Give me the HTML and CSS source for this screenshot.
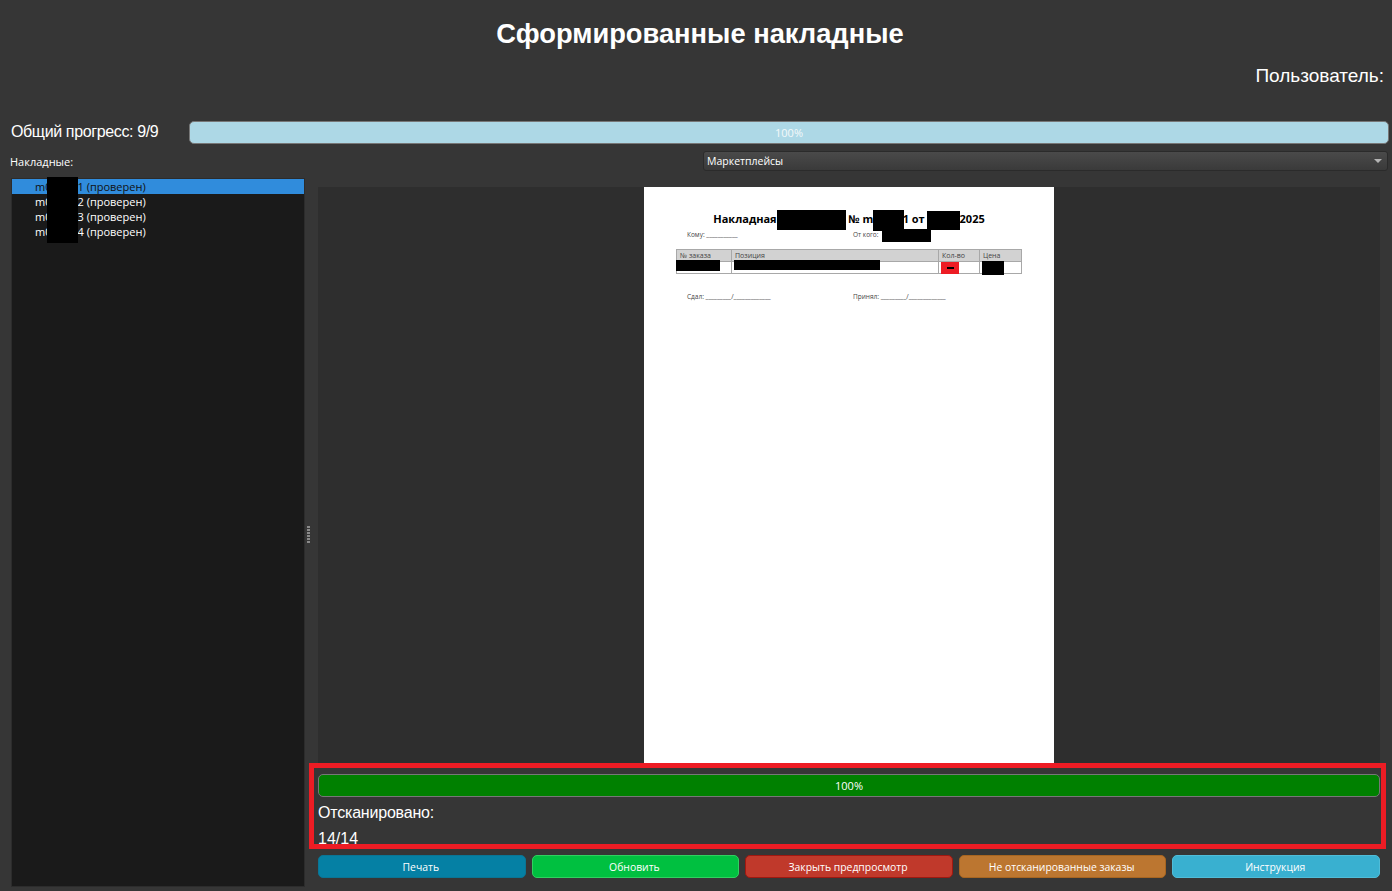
FILE: index.html
```html
<!DOCTYPE html>
<html lang="ru">
<head>
    <meta charset="UTF-8">
    <meta name="viewport" content="width=device-width, initial-scale=1.0">
    <title>Сформированные накладные</title>
    <link rel="stylesheet" href="styles.css">
</head>
<body>
    <div class="window">
        <h1 class="title">Сформированные накладные</h1>
        <div class="user">Пользователь:</div>

        <div class="total-row">
            <div class="total-label">Общий прогресс: 9/9</div>
            <div class="progress progress-blue">100%</div>
        </div>

        <div class="filter-row">
            <div class="small-label">Накладные:</div>
            <div class="combo">
                <span>Маркетплейсы</span>
                <span class="combo-arrow"></span>
            </div>
        </div>

        <div class="main">
            <div class="list">
                <div class="list-item selected">m0<span class="gap"></span>1 (проверен)</div>
                <div class="list-item">m0<span class="gap"></span>2 (проверен)</div>
                <div class="list-item">m0<span class="gap"></span>3 (проверен)</div>
                <div class="list-item">m0<span class="gap"></span>4 (проверен)</div>
                <div class="list-mask"></div>
            </div>

            <div class="splitter">
                <i></i><i></i><i></i><i></i><i></i><i></i>
            </div>

            <div class="content">
                <div class="preview">
                    <div class="sheet">
                        <div class="doc-title">Накладная <span class="mask mask-a"></span> № m0<span class="mask mask-b"></span>1 от <span class="mask mask-c"></span>2025</div>
                        <div class="doc-parties">
                            <div class="doc-col">Кому: ___________</div>
                            <div class="doc-col">От кого: <span class="mask mask-d"></span></div>
                        </div>
                        <div class="doc-table">
                            <div class="cell head">№ заказа</div>
                            <div class="cell head">Позиция</div>
                            <div class="cell head">Кол-во</div>
                            <div class="cell head">Цена</div>
                            <div class="cell"><span class="mask mask-e"></span></div>
                            <div class="cell"><span class="mask mask-f"></span></div>
                            <div class="cell"><span class="qty"><b></b></span></div>
                            <div class="cell"><span class="mask mask-g"></span></div>
                        </div>
                        <div class="doc-parties doc-sign">
                            <div class="doc-col">Сдал: _________/_____________</div>
                            <div class="doc-col">Принял: _________/_____________</div>
                        </div>
                    </div>
                </div>

                <div class="progress progress-green">100%</div>
                <div class="scan-label">Отсканировано:</div>
                <div class="scan-count">14/14</div>
                <div class="highlight"></div>

                <div class="buttons">
                    <button class="btn btn-print">Печать</button>
                    <button class="btn btn-refresh">Обновить</button>
                    <button class="btn btn-close">Закрыть предпросмотр</button>
                    <button class="btn btn-missing">Не отсканированные заказы</button>
                    <button class="btn btn-help">Инструкция</button>
                </div>
            </div>
        </div>
    </div>
</body>
</html>
```

FILE: styles.css
```css
html, body {
    margin: 0;
    height: 100%;
    background-color: #363636;
    overflow: hidden;
}
.window {
    height: 891px;
    display: flex;
    flex-direction: column;
    font-family: "Liberation Sans", Arial, sans-serif;
    color: #fff;
}
.title {
    margin: 0;
    height: 66px;
    padding: 1px 0 0 8px;
    box-sizing: border-box;
    line-height: 66px;
    font-size: 27.3px;
    font-weight: bold;
    text-align: center;
}
.user {
    height: 20px;
    line-height: 20px;
    padding-right: 8px;
    font-size: 19px;
    text-align: right;
}
.total-row {
    display: flex;
    align-items: center;
    margin-top: 35px;
    padding: 0 3px 0 11px;
}
.total-label {
    width: 178px;
    padding-bottom: 2px;
    font-size: 16px;
    letter-spacing: -0.37px;
}
.progress {
    flex: 1;
    box-sizing: border-box;
    height: 23px;
    line-height: 21px;
    border: 1px solid #777;
    border-radius: 5px;
    font-family: "Open Sans", sans-serif;
    font-size: 11px;
    text-align: center;
}
.progress-blue {
    background-color: #add8e6;
    color: #f4f8fa;
}
.progress-green {
    flex: none;
    height: 23px;
    margin-top: 11px;
    background-color: #008000;
}
.filter-row {
    display: flex;
    align-items: center;
    height: 20px;
    margin-top: 7px;
    padding: 0 4px 0 10px;
}
.small-label {
    width: 693px;
    font-family: "Open Sans", sans-serif;
    font-size: 11px;
}
.combo {
    flex: 1;
    box-sizing: border-box;
    height: 20px;
    display: flex;
    align-items: center;
    justify-content: space-between;
    padding: 0 5px 0 3px;
    background: linear-gradient(#4a4a4a, #3a3a3a);
    border: 1px solid #2b2b2b;
    border-radius: 3px;
    font-family: "Open Sans", sans-serif;
    font-size: 10.5px;
}
.combo-arrow {
    width: 0;
    height: 0;
    border-left: 4px solid transparent;
    border-right: 4px solid transparent;
    border-top: 4px solid #b5b5b5;
}
.main {
    flex: 1;
    display: flex;
    margin: 7px 12px 4px 11px;
    min-height: 0;
}
.list {
    position: relative;
    box-sizing: border-box;
    width: 294px;
    background-color: #1a1a1a;
    border: 1px solid #2c2c2c;
    font-family: "Open Sans", sans-serif;
    font-size: 11px;
}
.list-item {
    height: 15px;
    line-height: 15px;
    padding-left: 23px;
    color: #fff;
    white-space: nowrap;
}
.list-item.selected {
    background-color: #308cdc;
    color: #111;
}
.gap {
    display: inline-block;
    width: 26px;
}
.list-mask {
    position: absolute;
    left: 35px;
    top: -2px;
    width: 31px;
    height: 66px;
    background-color: #000;
}
.splitter {
    box-sizing: border-box;
    width: 13px;
    display: flex;
    flex-direction: column;
    align-items: flex-start;
    justify-content: center;
    gap: 1px;
    padding: 3px 0 0 2px;
}
.splitter i {
    width: 3px;
    height: 2px;
    background-color: #8a8a8a;
}
.content {
    position: relative;
    flex: 1;
    display: flex;
    flex-direction: column;
    padding-top: 9px;
}
.preview {
    height: 576px;
    display: flex;
    justify-content: center;
    background-color: #2e2e2e;
    overflow: hidden;
}
.sheet {
    box-sizing: border-box;
    width: 410px;
    padding: 0 32px;
    background-color: #fff;
    color: #444;
    font-family: "Open Sans", sans-serif;
    font-size: 6.5px;
}
.doc-title {
    height: 20px;
    margin-top: 22px;
    line-height: 20px;
    color: #000;
    font-size: 11px;
    font-weight: bold;
    text-align: center;
    white-space: nowrap;
}
.mask {
    display: inline-block;
    background-color: #000;
    vertical-align: middle;
}
.mask-a { width: 69px; height: 20px; margin-left: -3px; }
.mask-b { width: 31px; height: 21px; margin: 0 -1px 0 -7px; }
.mask-c { width: 33px; height: 19px; margin-left: -1px; }
.mask-d { width: 49px; height: 13px; margin-left: 2px; }
.mask-e { width: 44px; height: 11px; margin: -2px 0 0 -4px; display: block; }
.mask-f { width: 146px; height: 10px; margin: -2px 0 0 -1px; display: block; }
.mask-g { width: 22px; height: 14px; margin: -1px 0 0 -1px; display: block; }
.doc-parties {
    display: flex;
    height: 14px;
    margin-top: -1px;
    padding-left: 11px;
    line-height: 14px;
}
.doc-col {
    width: 166px;
    white-space: nowrap;
}
.doc-table {
    display: grid;
    grid-template-columns: 54px 207px 41px 42px;
    grid-template-rows: 12px 11px;
    margin-top: 7px;
    border: 1px solid #a8a8a8;
    font-size: 7px;
}
.cell {
    border-left: 1px solid #a8a8a8;
    padding-left: 3px;
    line-height: 12px;
}
.cell.head {
    background-color: #d2d2d2;
    border-bottom: 1px solid #a8a8a8;
}
.cell:nth-child(4n + 1) {
    border-left: none;
}
.qty {
    display: flex;
    align-items: center;
    justify-content: center;
    width: 18px;
    height: 12px;
    margin-left: -1px;
    background-color: #ed1c24;
}
.qty b {
    width: 7px;
    height: 2px;
    background-color: #000;
}
.doc-sign {
    margin-top: 16px;
}
.scan-label {
    height: 26px;
    margin-top: 3px;
    line-height: 26px;
    font-size: 16px;
    letter-spacing: -0.2px;
}
.scan-count {
    height: 26px;
    line-height: 26px;
    font-size: 16px;
    overflow: hidden;
}
.highlight {
    position: absolute;
    left: -9px;
    right: -6px;
    top: 585px;
    height: 76px;
    border: 5px solid #ed1c24;
    background: transparent;
}
.buttons {
    display: grid;
    grid-template-columns: repeat(5, 1fr);
    gap: 6px;
    margin-top: 3px;
}
.btn {
    height: 23px;
    padding: 0 2px 0 0;
    border: 1px solid;
    border-radius: 5px;
    color: #fff;
    font-family: "Open Sans", sans-serif;
    font-size: 10.4px;
}
.btn-print { background-color: #0580a4; border-color: #0a7595; }
.btn-refresh { background-color: #00c040; border-color: #30d060; }
.btn-close { background-color: #c0392b; border-color: #a01810; }
.btn-missing { background-color: #bc7630; border-color: #a86520; }
.btn-help { background-color: #39b0d0; border-color: #50bcd8; }
```
